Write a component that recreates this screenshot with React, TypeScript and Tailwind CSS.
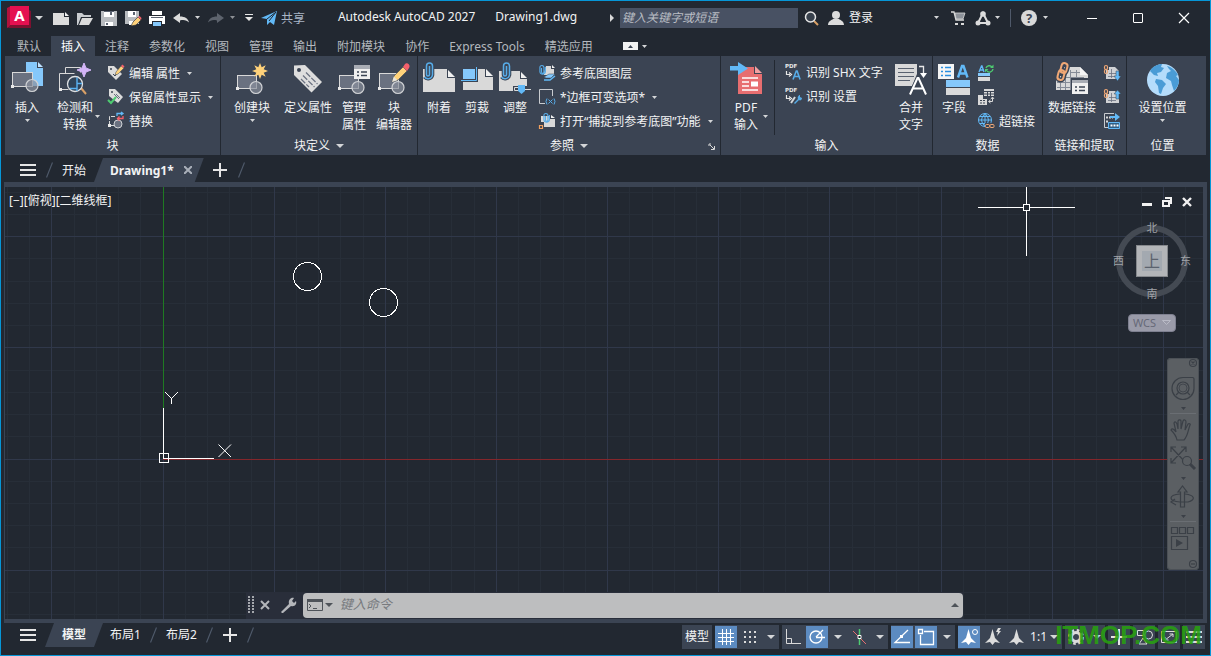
import type { ReactNode } from 'react'
import { useState } from 'react'
import clsx from 'clsx'

type IconProps = { children: ReactNode; size?: 16 | 32 }

function Icon({ children, size = 16 }: IconProps) {
  return (
    <svg
      viewBox={`0 0 ${size} ${size}`}
      className={clsx('shrink-0 overflow-visible', size === 32 ? 'size-8' : 'size-4')}
      fill="none"
      aria-hidden="true"
    >
      {children}
    </svg>
  )
}

function Caret({ wide = false, className }: { wide?: boolean; className?: string }) {
  return (
    <svg
      viewBox="0 0 8 4"
      className={clsx('shrink-0', wide ? 'h-1 w-2' : 'h-[3px] w-[5px]', className)}
      preserveAspectRatio="none"
      aria-hidden="true"
    >
      <path d="M0 0h8L4 4z" fill="#d4d6d8" />
    </svg>
  )
}

function Slash() {
  return (
    <svg viewBox="0 0 7 16" className="h-4 w-[7px] shrink-0" aria-hidden="true">
      <path d="M6.5 0.5L0.5 15.5" stroke="#4f596a" strokeWidth="1.2" />
    </svg>
  )
}

function Menu() {
  return (
    <Icon>
      <path d="M0 3h16M0 8h16M0 13h16" stroke="#e6e6e6" strokeWidth="2" />
    </Icon>
  )
}

function Plus() {
  return (
    <Icon>
      <path d="M1 8h14M8 1v14" stroke="#e6e6e6" strokeWidth="2" />
    </Icon>
  )
}

/* ---------- large ribbon icons ---------- */

function Block({ x = 1.5, y = 13.5, w = 19, h = 13 }) {
  return (
    <>
      <rect x={x} y={y} width={w} height={h} fill="#6a7180" stroke="#d9d9d9" />
      <rect x={x - 1.5} y={y + h - 1.5} width="3" height="3" fill="#e8e8e8" />
      <circle cx={x + w - 0.5} cy={y + h - 1} r="6" fill="#8a909c" fillOpacity="0.7" stroke="#d0d2d5" strokeWidth="1.2" />
    </>
  )
}

const InsertIcon = () => (
  <Icon size={32}>
    <path d="M15 0h11v6h6v18H15z" fill="#85c8fb" />
    <path d="M27 0l5 5h-5z" fill="#bfe2ff" />
    <Block x={1.5} y={10.5} w={20} h={14} />
  </Icon>
)

const DetectIcon = () => (
  <Icon size={32}>
    <path d="M6.500 11V5.500h15v5M0.500 27V11.500h15M0.500 27.500h9" stroke="#d9d9d9" />
    <rect x="0" y="26" width="3" height="3" fill="#e8e8e8" />
    <path d="M22 26l5 6" stroke="#d9a066" strokeWidth="2" />
    <circle cx="16" cy="22" r="7.500" fill="#2f4257" stroke="#dfe1e3" strokeWidth="1.300" />
    <path d="M18 15.500V29M18 21.500h5M11 26.500h7" stroke="#5ab2f2" strokeWidth="1.400" />
    <path d="M25 1l2 5 5 2-5 2-2 5-2-5-5-2 5-2z" fill="#d3b5f7" stroke="#d3b5f7" />
  </Icon>
)

const CreateIcon = () => (
  <Icon size={32}>
    <Block />
    <path d="M24 1l1.700 4.300 4-2-2 4 4.300 1.700-4.300 1.700 2 4-4-2L24 17l-1.700-4.300-4 2 2-4L16 9l4.300-1.700-2-4 4 2z" fill="#ffd27a" />
  </Icon>
)

const TagIcon = () => (
  <Icon size={32}>
    <path fillRule="evenodd" d="M2 3.500L13 3l17 17-10.500 10.500L2 13zM7 6a2 2 0 100 4.010A2 2 0 007 6z" fill="#dedede" />
    <path d="M11 13.500L22.500 25M14 10.500L25.500 22M9 17l8 8" stroke="#6a7180" strokeWidth="1.200" strokeDasharray="6 1.500" />
  </Icon>
)

const ManageIcon = () => (
  <Icon size={32}>
    <Block x={1.500} y={13.500} w={19} />
    <path d="M16 3h16v14H16z" fill="#f0f0f0" />
    <path d="M16 3h16v4H16z" fill="#a9adb5" />
    <path d="M19 10h2M23 10h6M19 13.500h2M23 13.500h6" stroke="#3b4453" strokeWidth="1.300" />
  </Icon>
)

const Pencil = () => (
  <>
    <path d="M14 20l2-6L25 5l4 4-9 9z" fill="#ffd27a" stroke="#3b4453" strokeWidth="0.600" />
    <path d="M14 20l1.800-5.500 3.700 3.700z" fill="#e8e4da" />
    <path d="M25 5l2-3c2-2 6 1 4 4l-2 3z" fill="#f4606b" />
  </>
)

const EditorIcon = () => (
  <Icon size={32}>
    <Block x={1.500} y={11.500} w={19} h={15} />
    <Pencil />
  </Icon>
)

function PaperClip({ x = 0 }: { x?: number }) {
  const d = 'M7.500 4v8.500a1.500 1.500 0 01-3 0V4a3 3 0 016 0v9a4.500 4.500 0 01-8 2'
  return (
    <g transform={`translate(${x} 0)`}>
      <path d={d} stroke="#3b4453" strokeWidth="3.600" />
      <path d={d} stroke="#57ace8" strokeWidth="1.500" />
    </g>
  )
}

const AttachIcon = () => (
  <Icon size={32}>
    <path d="M0 7h24v9h8v14H0z" fill="#d9d9d9" />
    <path d="M25 8l7 7h-7z" fill="#f1f1f1" />
    <PaperClip x={-1} />
  </Icon>
)

const ClipIcon = () => (
  <Icon size={32}>
    <path d="M2 7h22v8h8v13H2z" fill="#d9d9d9" />
    <path d="M25 7l7 7h-7z" fill="#f1f1f1" />
    <path d="M0 5h17v15H0z" fill="#3b4453" />
    <path d="M2 7h12v10H2z" fill="#85c8fb" />
    <path d="M0 18.500h15.500V5" stroke="#62b9f7" />
  </Icon>
)

const AdjustIcon = () => (
  <Icon size={32}>
    <path d="M0 9h21v8h7v12H0z" fill="#d9d9d9" />
    <path d="M22 10l6 6h-6z" fill="#f1f1f1" />
    <PaperClip />
    <path d="M14 24h18v6H14z" fill="#3b4453" />
    <path d="M15.500 25.500h4v3h-4zM25 27.500h7" stroke="#d9d9d9" />
    <path d="M19 23h7v6l-3.500 3L19 29z" fill="#62b9f7" />
  </Icon>
)

const PdfIcon = () => (
  <Icon size={32}>
    <path d="M8 5h16v7h8v20H8z" fill="#e76e70" />
    <path d="M25 4l7 7h-7z" fill="#f3a0a1" />
    <path d="M12 16h16M12 20h7M12 24h7M12 28h16" stroke="#fff" strokeWidth="1.300" />
    <path d="M21 19.500h7v5h-7z" fill="#fff" />
    <path d="M0 4h8V0l10 6.500L8 13V8.500H0z" fill="#62b9f7" />
  </Icon>
)

const MergeTextIcon = () => (
  <Icon size={32}>
    <path d="M0 2h22v10l-5 12H0z" fill="#d9d9d9" />
    <path d="M3 6.500h16M3 10.500h16M3 14.500h16M3 18.500h12" stroke="#59616f" />
    <path d="M24 4.500h4.500V13" stroke="#e8e8e8" strokeWidth="1.300" />
    <path d="M25 11h7l-3.500 5z" fill="#fff" />
    <path d="M15 33l8-17 9 17M18 27.500h11" stroke="#3b4453" strokeWidth="4" />
    <path d="M15 32.500L22.500 16h1L31 32.500M18 26.500h10.500" stroke="#fff" strokeWidth="2" />
  </Icon>
)

const FieldIcon = () => (
  <Icon size={32}>
    <path d="M0 2h16v15H0z" fill="#f5f5f5" />
    <path d="M3 5.500h2M7 5.500h6M3 9.500h2M7 9.500h6M3 13.500h2M7 13.500h6" stroke="#2a8fe0" strokeWidth="1.500" />
    <path d="M8 18h24v7H8z" fill="#85c8fb" />
    <path d="M8 26h24v7H8z" fill="#d9d9d9" />
    <path d="M20 15.500L24 4h1.500l4 11.500M21.500 11.500h6.500" stroke="#62b9f7" strokeWidth="2.400" />
  </Icon>
)

const DataLinkIcon = () => (
  <Icon size={32}>
    <path d="M0 14h8V5h16l8 8v8H16v7H0z" fill="#d9d9d9" />
    <path d="M24 5v8h8z" fill="#f5f5f5" />
    <path d="M1 20.500h15M1 25.500h14M4.500 20v8M9.500 14v14M14.500 8v20M20.500 8v10M15 10.500h9M10 15.500h18" stroke="#858b96" />
    <path d="M15 16h17v17H15z" fill="#3b4453" />
    <path d="M16 18h16v14H16z" fill="#f0f0f0" />
    <path d="M16 18h16v3H16z" fill="#a9adb5" />
    <path d="M19 25h2M23 25h6M19 28.500h2M23 28.500h6" stroke="#3b4453" strokeWidth="1.300" />
    <g stroke="#3b4453" strokeWidth="5">
      <rect x="5" y="1" width="6" height="10" rx="3" transform="rotate(15 8 6)" />
      <rect x="2" y="8" width="6" height="10" rx="3" transform="rotate(15 5 13)" />
    </g>
    <g stroke="#f0a876" strokeWidth="2">
      <rect x="5" y="1" width="6" height="10" rx="3" transform="rotate(15 8 6)" />
      <rect x="2" y="8" width="6" height="10" rx="3" transform="rotate(15 5 13)" />
    </g>
  </Icon>
)

const GlobeIcon = () => (
  <Icon size={32}>
    <circle cx="16" cy="18" r="16" fill="#b4dcfb" />
    <path
      d="M3 9c3-5 8-7 12-7l-1 3 3 1-3 4-4 1 1 3-4-1-3-3zM9 17l6 1 4 4-3 4-2 6-2-1-1-7-3-4zM20 4c5 1 9 5 11 9l-2 1 3 4c0 4-2 8-5 11l-2-6-1-4-5-3 1-5 4-2-2-2z"
      fill="#4a9cd6"
    />
  </Icon>
)

/* ---------- small ribbon icons ---------- */

const EditAttrIcon = () => (
  <Icon>
    <path d="M0 1l6 0 8 8-6 6-8-8z" fill="#dcdcdc" />
    <circle cx="3" cy="4" r="1" fill="#3b4453" />
    <path d="M5 9l2 2 2-3" stroke="#3b4453" />
    <path d="M8 7l5-6 3 2-6 6-3 1z" fill="#ffd27a" stroke="#3b4453" strokeWidth="0.500" />
    <path d="M13 1l1.500-1.500 2 2L15 3z" fill="#f4606b" />
  </Icon>
)

const KeepAttrIcon = () => (
  <Icon>
    <path d="M1 0l6 0 8 8-5 6-4-3-5-4z" fill="#dcdcdc" />
    <circle cx="4" cy="3" r="1" fill="#3b4453" />
    <path d="M6 5l5 5M8 5l4 4" stroke="#6a7180" />
    <path d="M0 11l3 3 5-6" stroke="#4ecb71" strokeWidth="2" />
  </Icon>
)

const ReplaceIcon = () => (
  <Icon>
    <path d="M7 3.500H1.500v9H6" stroke="#d9d9d9" strokeDasharray="4 1" />
    <path d="M0 11h3v3H0z" fill="#e8e8e8" />
    <circle cx="10" cy="11" r="4" fill="#6a7180" stroke="#d0d2d5" />
    <path d="M10 5.500h5V3M11.500 3.500l-2 2 2 2" stroke="#f4606b" strokeWidth="1.300" />
    <path d="M9 3V.500h5M13-1l2 1.500L13 2" stroke="#62b9f7" strokeWidth="1.300" />
  </Icon>
)

const SmallClip = () => (
  <path d="M2.500 3v4a1.200 1.200 0 002.400 0V2.500a2 2 0 00-4 0V7a2.800 2.800 0 005.500 0V2" stroke="#57ace8" strokeWidth="1.100" />
)

const LayerIcon = () => (
  <Icon>
    <path d="M7 1h5v3h3v6H5V8z" fill="#d9d9d9" />
    <path d="M13 0l3 3h-3z" fill="#f1f1f1" />
    <SmallClip />
    <path d="M5 12l5-3h6l-4 4H7z" fill="#85c8fb" stroke="#3b4453" strokeWidth="0.500" />
    <path d="M5 15h6l5-4" stroke="#62b9f7" strokeWidth="1.500" />
  </Icon>
)

const FrameIcon = () => (
  <Icon>
    <path d="M6 14.500H.5V.500h13V7" stroke="#c9ccd0" />
    <path d="M8 9.500q-2 3 0 6M15 9.500q2 3 0 6M9.500 10.500l4 4M13.500 10.500l-4 4" stroke="#57ace8" />
  </Icon>
)

const SnapIcon = () => (
  <Icon>
    <path d="M2 3h9v3h5v8H5V9H2z" fill="#d9d9d9" />
    <path d="M12 2l4 3h-4z" fill="#f1f1f1" />
    <g transform="translate(4 0)">
      <SmallClip />
    </g>
    <path d="M.5 12.500h3v3h-3z" stroke="#f0a060" strokeWidth="1.200" />
  </Icon>
)

function PdfText({ children }: { children: ReactNode }) {
  return (
    <Icon>
      <text x="0" y="4" fontSize="5.500" fontWeight="700" fill="#e8e8e8" fontFamily="DejaVu Sans, sans-serif">PDF</text>
      <path d="M1.500 7v3.500H5M4 8.500l2.500 2L4 12.500" stroke="#e8e8e8" strokeWidth="1.200" />
      {children}
    </Icon>
  )
}

const RefreshFieldIcon = () => (
  <Icon>
    <path d="M0 8h12v3H0z" fill="#85c8fb" />
    <path d="M0 12h12v4H0z" fill="#d9d9d9" />
    <path d="M1 7l2.500-6h.5L6 7M2 5h4" stroke="#62b9f7" strokeWidth="1.300" />
    <path d="M8 3a3.500 3.500 0 016-1M15 4a3.500 3.500 0 01-6 2" stroke="#4ecb71" strokeWidth="1.400" />
    <path d="M15.500-.5V3H12zM7 7.500V4h3.500z" fill="#4ecb71" />
  </Icon>
)

const TableIcon = () => (
  <Icon>
    <path d="M6 0h10v7H6zM0 6h5v4h4v6H0z" fill="#d9d9d9" />
    <path d="M6 2.500h10M6 5h10M9.500 2.500V7M12.500 2.500V7M2 11.500h2M5 11.500h2M2 14h2M5 14h2" stroke="#3b4453" />
    <path d="M11 12.500h3.500V8.500M13 10l1.500-2 1.500 2M12.500 11l-2 1.500 2 1.500" stroke="#d9d9d9" />
  </Icon>
)

const WebIcon = () => (
  <Icon>
    <circle cx="7" cy="7" r="6.500" stroke="#62b9f7" />
    <path d="M7 .5v13M.5 7h13M2 3.500h10M2 10.500h6M7 .5q-7 6.500 0 13M7 .5q7 6.500 0 13" stroke="#62b9f7" />
    <path d="M7 10h9v5H7z" fill="#3b4453" />
    <rect x="7.500" y="11.500" width="4" height="3" rx="1" stroke="#f0a876" />
    <rect x="12" y="11.500" width="4" height="3" rx="1" stroke="#f0a876" />
  </Icon>
)

function LinkArrowIcon({ up = false }: { up?: boolean }) {
  return (
    <Icon>
      <path d="M2 5h3V2h6l4 4v8H2z" fill="#d0d2d5" />
      <path d="M5 8.500h7M4 11.500h8M7.500 4v9" stroke="#6a7180" strokeWidth=".800" />
      <rect x=".500" y="0.500" width="3" height="4" rx="1.500" stroke="#f0a876" strokeWidth="1.200" />
      <rect x=".500" y="4.500" width="3" height="4" rx="1.500" stroke="#f0a876" strokeWidth="1.200" />
      <path
        d={up ? 'M12 10V5h-2l3.500-4L17 5h-2v5z' : 'M12 6v5h-2l3.500 5 3.500-5h-2V6z'}
        fill="#62b9f7"
        stroke="#3b4453"
        strokeWidth=".500"
      />
    </Icon>
  )
}

const ExtractIcon = () => (
  <Icon>
    <path d="M4 14.500H.500v-14H10" stroke="#c9ccd0" />
    <path d="M2 4.500h7M2 8.500h2" stroke="#d9d9d9" strokeDasharray="2 1" strokeWidth="2" />
    <path d="M6 3h5V0l5 4-5 4V5H6z" fill="#62b9f7" />
    <path d="M4.500 9.500h11v6h-11z" fill="#2f5f86" stroke="#62b9f7" />
    <path d="M6.500 12.500h8" stroke="#fff" strokeDasharray="2 1" strokeWidth="2" />
  </Icon>
)

/* ---------- ribbon building blocks ---------- */

type BigButtonProps = { icon: ReactNode; lines: string[]; width?: string; caret?: 'below' | 'side' }

function BigButton({ icon, lines, width = 'w-8', caret }: BigButtonProps) {
  return (
    <button type="button" className="flex shrink-0 items-end gap-px self-start pt-1.5">
      <span className={clsx('flex flex-col items-center', width)}>
        {icon}
        <span className="mt-[5px] text-center leading-[17px] whitespace-nowrap">
          {lines.map(line => <span key={line} className="block">{line}</span>)}
        </span>
        {caret === 'below' && <Caret className="mt-[3px]" />}
      </span>
      {caret === 'side' && <Caret className="mb-[15px]" />}
    </button>
  )
}

function SmallButton({ icon, label, name, caret = false }: { icon: ReactNode; label?: string; name?: string; caret?: boolean }) {
  return (
    <button type="button" aria-label={name} className="flex h-6 items-center gap-[5px] whitespace-nowrap">
      {icon}
      {label && <span className="pt-0.5">{label}</span>}
      {caret && <Caret className="ml-0.5" />}
    </button>
  )
}

function Panel({ title, grow, more, launcher, className, children }: {
  title: string
  grow: string
  more?: boolean
  launcher?: boolean
  className?: string
  children: ReactNode
}) {
  return (
    <section aria-label={title} className={clsx('relative flex flex-col border-r border-[#222831] last:border-0', grow)}>
      <div className={clsx('flex h-[79px]', className)}>{children}</div>
      <div className="flex h-5 items-center justify-center gap-1.5 pt-0.5">
        {title}
        {more && <Caret wide />}
      </div>
      {launcher && (
        <button type="button" aria-label="参照设置" className="absolute right-1 bottom-1">
          <svg viewBox="0 0 8 8" className="size-2" fill="none" aria-hidden="true">
            <path d="M1 3V1h2M2 2l4 4M6.500 3v3.500H3" stroke="#d9d9d9" />
          </svg>
        </button>
      )}
    </section>
  )
}

function Ribbon() {
  return (
    <div className="mx-1 mb-[3px] flex bg-[#3b4453] text-[#f2f3f4]">
      <Panel title="块" grow="flex-[215]">
        <BigButton icon={<InsertIcon />} lines={['插入']} width="w-11" caret="below" />
        <div className="ml-[7px] flex gap-2">
          <BigButton icon={<DetectIcon />} lines={['检测和', '转换']} width="w-[38px]" caret="side" />
          <div className="pt-[5px]">
            <SmallButton icon={<EditAttrIcon />} label="编辑 属性" caret />
            <SmallButton icon={<KeepAttrIcon />} label="保留属性显示" caret />
            <SmallButton icon={<ReplaceIcon />} label="替换" />
          </div>
        </div>
      </Panel>
      <Panel title="块定义" grow="flex-[196]" more className="gap-1.5 pl-[5px]">
        <BigButton icon={<CreateIcon />} lines={['创建块']} width="w-[52px]" caret="below" />
        <BigButton icon={<TagIcon />} lines={['定义属性']} width="w-12" />
        <BigButton icon={<ManageIcon />} lines={['管理', '属性']} />
        <BigButton icon={<EditorIcon />} lines={['块', '编辑器']} width="w-9" />
      </Panel>
      <Panel title="参照" grow="flex-[302]" more launcher className="gap-1.5 pl-[5px]">
        <BigButton icon={<AttachIcon />} lines={['附着']} />
        <BigButton icon={<ClipIcon />} lines={['剪裁']} />
        <BigButton icon={<AdjustIcon />} lines={['调整']} />
        <div className="pt-[5px] pl-0.5">
          <SmallButton icon={<LayerIcon />} label="参考底图图层" />
          <SmallButton icon={<FrameIcon />} label="*边框可变选项*" caret />
          <SmallButton icon={<SnapIcon />} label="打开“捕捉到参考底图”功能" caret />
        </div>
      </Panel>
      <Panel title="输入" grow="flex-[211]" className="pr-[5px] pl-[9px]">
        <BigButton icon={<PdfIcon />} lines={['PDF', '输入']} caret="side" />
        <div className="mt-1 ml-1.5 w-px bg-[#222831]" />
        <div className="ml-2.5 pt-1">
          <SmallButton
            icon={<PdfText><path d="M8 15.500L11.300 7h.8l3 8.500M9.500 12.500h4.500" stroke="#57ace8" strokeWidth="1.600" /></PdfText>}
            label="识别 SHX 文字"
          />
          <SmallButton
            icon={<PdfText><path d="M6 15l4-6" stroke="#d9d9d9" strokeWidth="2" /><path d="M9 15l4-4c-1-2 1-4 2-4v2l2 1c0 2-2 3-3 2l-4 4z" fill="#57ace8" /></PdfText>}
            label="识别 设置"
          />
        </div>
        <div className="ml-auto flex">
          <BigButton icon={<MergeTextIcon />} lines={['合并', '文字']} />
        </div>
      </Panel>
      <Panel title="数据" grow="flex-[109]" className="gap-2 pl-[5px]">
        <BigButton icon={<FieldIcon />} lines={['字段']} />
        <div className="pt-[5px]">
          <SmallButton icon={<RefreshFieldIcon />} name="更新字段" />
          <SmallButton icon={<TableIcon />} name="OLE 对象" />
          <SmallButton icon={<WebIcon />} label="超链接" />
        </div>
      </Panel>
      <Panel title="链接和提取" grow="flex-[83]" className="gap-2 pl-[5px]">
        <BigButton icon={<DataLinkIcon />} lines={['数据链接']} width="w-12" />
        <div className="pt-[5px]">
          <SmallButton icon={<LinkArrowIcon />} name="从源下载" />
          <SmallButton icon={<LinkArrowIcon up />} name="上载到源" />
          <SmallButton icon={<ExtractIcon />} name="提取数据" />
        </div>
      </Panel>
      <Panel title="位置" grow="flex-[71] pr-2" className="justify-center">
        <BigButton icon={<GlobeIcon />} lines={['设置位置']} width="w-12" caret="below" />
      </Panel>
    </div>
  )
}

/* ---------- title bar ---------- */

function ToolButton({ name, children }: { name: string; children: ReactNode }) {
  return <button type="button" aria-label={name} className="flex shrink-0 items-center">{children}</button>
}

function TitleBar() {
  return (
    <header className="flex h-[35px] items-center pb-0.5 pl-1.5 text-[#f2f3f4]">
      <ToolButton name="应用程序菜单">
        <svg viewBox="0 0 24 23" className="h-[23px] w-6" aria-hidden="true">
          <path d="M0 2l4-2v20l-4 2z" fill="#b0123c" />
          <path d="M1 22h23V5l-2-1-1 14H4z" fill="#7d1130" />
          <rect x="3" y="0" width="19" height="19" fill="#e51050" />
          <text x="12.500" y="15" fontSize="15" fontWeight="700" textAnchor="middle" fill="#fff" fontFamily="Noto Sans, sans-serif">A</text>
        </svg>
        <Caret wide className="ml-1" />
      </ToolButton>
      <div className="ml-2.5 flex items-center gap-2">
        <ToolButton name="新建">
          <Icon><path d="M0 3h11v4h5v8H0z" fill="#dcdcdc" /><path d="M12 2l4 4h-4z" fill="#f1f1f1" /></Icon>
        </ToolButton>
        <ToolButton name="打开">
          <Icon><path d="M0 3h5l2 2h7v2H4L1 15H0z" fill="#c9ccd0" /><path d="M5 8h11l-4 7H2z" fill="#dcdcdc" /></Icon>
        </ToolButton>
        <ToolButton name="保存">
          <Icon>
            <path d="M0 1h16v15H0z" fill="#b9bcc0" />
            <path d="M3 1h10v6H3zM4 12h8v4H4z" fill="#fff" />
            <path d="M3 1h10v1H3zM9 2h2v3H9zM5 13h2v2H5z" fill="#59616f" />
          </Icon>
        </ToolButton>
        <ToolButton name="另存为">
          <Icon>
            <path d="M0 1h14v13H0z" fill="#b9bcc0" />
            <path d="M3 1h8v6H3zM4 11h4v4H4z" fill="#fff" />
            <path d="M8 2h2v3H8z" fill="#59616f" />
            <path d="M6 16l2-4 5-5 3 3-5 5z" fill="#ffd27a" stroke="#222831" strokeWidth=".6" />
            <path d="M13 7l1.500-1 2 2L16 10z" fill="#f4606b" />
          </Icon>
        </ToolButton>
        <ToolButton name="打印">
          <Icon>
            <path d="M3 1h10v4H3zM0 6h16v8h-3v-3H3v3H0z" fill="#fff" />
            <path d="M2 7.500h12" stroke="#59616f" />
            <path d="M4 12h8v4H4z" fill="#85c8fb" />
          </Icon>
        </ToolButton>
        <ToolButton name="放弃">
          <Icon><path d="M0 8l7-5v3.500c5 0 8 2 9 6-2-2-5-3-9-2V13z" fill="#dcdcdc" /></Icon>
          <Caret className="ml-1.5" />
        </ToolButton>
        <ToolButton name="重做">
          <Icon><path d="M16 8L9 3v3.500c-5 0-8 2-9 6 2-2 5-3 9-2V13z" fill="#5d636d" /></Icon>
          <Caret className="ml-1.5 opacity-60" />
        </ToolButton>
        <ToolButton name="自定义快速访问工具栏">
          <svg viewBox="0 0 8 8" className="ml-0.5 size-2" aria-hidden="true">
            <path d="M0 .5h8" stroke="#e6e6e6" /><path d="M0 3h8L4 7z" fill="#e6e6e6" />
          </svg>
        </ToolButton>
      </div>
      <button type="button" className="ml-2 flex shrink-0 items-center gap-1 text-[#aab6c6]">
        <Icon><path d="M0 8L16 1l-3 14-4-3-3 3V9z" fill="#62b9f7" /><path d="M6 9l9-7-7 9" stroke="#222831" /></Icon>
        <span className="pt-0.5">共享</span>
      </button>
      <h1 className="flex flex-1 justify-center gap-5 pb-0.5 whitespace-nowrap">
        <span>Autodesk AutoCAD 2027</span>
        <span>Drawing1.dwg</span>
      </h1>
      <div className="flex items-center">
        <svg viewBox="0 0 4 8" className="h-2 w-1" aria-hidden="true"><path d="M0 0l4 4-4 4z" fill="#d9d9d9" /></svg>
        <input
          aria-label="搜索"
          placeholder="键入关键字或短语"
          className="ml-1.5 h-5 w-[178px] bg-[#485163] px-0.5 italic outline-none placeholder:text-[#b9bdc4]"
        />
        <div className="ml-1.5 flex items-center gap-2">
          <ToolButton name="查找">
            <Icon>
              <path d="M10 11l4 4" stroke="#d9a066" strokeWidth="2" />
              <circle cx="6.500" cy="7" r="5" fill="#38414d" stroke="#e6e6e6" strokeWidth="1.500" />
            </Icon>
          </ToolButton>
          <button type="button" className="flex items-center gap-[5px]">
            <Icon><circle cx="8" cy="5" r="4" fill="#dcdcdc" /><path d="M0 15c0-4 4-5 5-6h6c1 1 5 2 5 6z" fill="#dcdcdc" /></Icon>
            登录
            <Caret className="ml-14" />
          </button>
        </div>
        <div className="ml-3 flex items-center gap-2">
          <ToolButton name="应用商店">
            <Icon>
              <path d="M0 2h3l2 8h8" stroke="#d9d9d9" strokeWidth="1.300" />
              <path d="M4 3h10l-2 6H5z" fill="#8d929a" stroke="#d9d9d9" strokeWidth=".8" />
              <path d="M4 13h3v2H4zM10 13h3v2h-3z" fill="#d9d9d9" />
            </Icon>
          </ToolButton>
          <ToolButton name="Autodesk 应用">
            <Icon>
              <path d="M8 3L3 13h10z" stroke="#dcdcdc" strokeWidth="2" />
              <circle cx="8" cy="4" r="2.800" fill="#dcdcdc" /><circle cx="3" cy="13" r="2.500" fill="#dcdcdc" /><circle cx="13" cy="13" r="2.500" fill="#dcdcdc" />
            </Icon>
            <Caret className="ml-1" />
          </ToolButton>
        </div>
        <div className="mx-2.5 h-[18px] w-px bg-[#4f596a]" />
        <ToolButton name="帮助">
          <Icon>
            <circle cx="8" cy="8" r="8" fill="#d9d9d9" />
            <text x="8" y="12.500" fontSize="13" fontWeight="700" textAnchor="middle" fill="#3b4453" fontFamily="Noto Sans, sans-serif">?</text>
          </Icon>
          <Caret className="ml-1.5" />
        </ToolButton>
        <div className="flex gap-[30px] pr-[18px] pl-9">
          <ToolButton name="最小化"><Icon><path d="M3 8.500h10" stroke="#fff" /></Icon></ToolButton>
          <ToolButton name="最大化"><Icon><rect x="3.500" y="3.500" width="9" height="9" rx=".5" stroke="#fff" /></Icon></ToolButton>
          <ToolButton name="关闭"><Icon><path d="M3 3l10 10M13 3L3 13" stroke="#fff" strokeWidth="1.200" /></Icon></ToolButton>
        </div>
      </div>
    </header>
  )
}

const tabs = ['默认', '插入', '注释', '参数化', '视图', '管理', '输出', '附加模块', '协作', 'Express Tools', '精选应用']

function RibbonTabs() {
  const [active, setActive] = useState('插入')
  return (
    <nav className="flex h-5 items-center pl-1.5 text-[#b4b8be]">
      {tabs.map(tab => (
        <button
          key={tab}
          type="button"
          onClick={() => setActive(tab)}
          className={clsx('h-5 px-2.5 pt-0.5 whitespace-nowrap', tab === active && 'bg-[#3b4453] text-white')}
        >
          {tab}
        </button>
      ))}
      <button type="button" aria-label="最小化功能区" className="ml-5 flex items-center gap-1">
        <svg viewBox="0 0 15 8" className="h-2 w-[15px]" aria-hidden="true">
          <path d="M0 0h15v8H0z" fill="#f2f2f2" /><path d="M5 6l2.500-3L10 6z" fill="#3b4453" />
        </svg>
        <Caret />
      </button>
    </nav>
  )
}

/* ---------- drawing area ---------- */

const ORIGIN = { x: 158, y: 272 }
const STEP = 111.15

function gridLines(origin: number, count: number) {
  return Array.from({ length: count }, (_, i) => i - 15).map(n => ({
    n,
    at: Math.floor(origin + (n * STEP) / 5),
    major: n % 5 === 0,
  }))
}

function Drawing() {
  const columns = gridLines(ORIGIN.x, 120)
  const rows = gridLines(ORIGIN.y, 80)
  return (
    <svg className="absolute inset-0 h-full w-full" fill="none" aria-hidden="true">
      {[false, true].map(major => (
        <g key={String(major)} fill={major ? '#30384a' : '#272e38'}>
          {columns.filter(c => c.major === major).map(c => <rect key={c.n} x={c.at} y="0" width="1" height="100%" />)}
          {rows.filter(r => r.major === major).map(r => <rect key={r.n} x="0" y={r.at} width="100%" height="1" />)}
        </g>
      ))}
      <rect x={ORIGIN.x} y="0" width="1" height="222" fill="#1f7a22" />
      <rect x={ORIGIN.x} y={ORIGIN.y} width="100%" height="1" fill="#84262b" />
      <g stroke="#fff" shapeRendering="crispEdges">
        <path d="M158.500 221v50.500H209M154.500 266.500h9v9h-9z" />
        <circle cx="302.500" cy="89.500" r="14" />
        <circle cx="378.500" cy="115.500" r="14" />
        <path d="M973 20.500h45M1025 20.500h45M1021.500 0v17M1021.500 24v45M1018.500 17.500h6v6h-6z" />
      </g>
      <path d="M160 205l6.500 6.500L173 205M166.500 211v6M213.500 257.500l12.500 12.500M226 257.500L213.500 270" stroke="#fff" />
    </svg>
  )
}

function ViewCube() {
  return (
    <div className="absolute top-[33px] right-3 flex w-[78px] flex-col items-center text-[#a0a3a8]">
      <div className="relative flex h-[82px] w-[78px] items-center justify-between">
        <div className="absolute inset-x-[3px] inset-y-[5px] rounded-full border-[6px] border-[#444a53]" />
        <span className="relative text-[11px]">西</span>
        <div className="relative flex h-[82px] flex-col items-center justify-between text-[11px]">
          <span className="leading-4">北</span>
          <button type="button" className="grid size-8 place-items-center border border-[#85888c] bg-[#b3b5b8]">
            <span className="grid size-5 place-items-center bg-[#a3a9b0] text-base leading-5 text-[#5b636e]">上</span>
          </button>
          <span className="leading-4">南</span>
        </div>
        <span className="relative text-[11px]">东</span>
      </div>
      <button type="button" className="mt-3 flex h-[18px] w-12 items-center justify-between rounded-sm border border-[#7e8090] bg-[#9a9ba9] px-1 text-[11px] text-[#666978]">
        WCS
        <svg viewBox="0 0 9 6" className="h-1.5 w-[9px]" fill="none" aria-hidden="true"><path d="M.5.500h8l-4 4z" stroke="#b9bac6" /></svg>
      </button>
    </div>
  )
}

function NavBar() {
  return (
    <div className="absolute top-[171px] right-1 h-[212px] w-8 rounded bg-[#5b5f63] ring-1 ring-[#4b5056] ring-inset">
      <svg viewBox="0 0 32 212" className="h-full w-full" fill="none" stroke="#3b4047" aria-label="导航栏" role="img">
        <g strokeWidth="1.200">
          <circle cx="26" cy="5" r="3.500" /><path d="M24.500 3.500l3 3M27.500 3.500l-3 3" />
          <path d="M16 19.500h9.500a1.500 1.500 0 011.500 1.500v9.500a11 11 0 11-11-11z" />
          <circle cx="16" cy="30" r="6" /><circle cx="16" cy="30" r="4" strokeWidth=".8" />
          <path d="M9 37l3-3M23 37l-3-3" />
          <path d="M10 82c-1-5-3-7-6-10 1-2 3-1 5 2l-2-9c1-2 2-1 3 1l1 5 0-8c1-2 3-1 3 0v8l2-8c1-2 3-1 3 1l-1 8 3-6c1-1 3 0 2 1-2 5-2 11-6 15z" />
          <path d="M4 89l15 16M19 89L4 105M4 94v-5h5M14 89h5v5M4 100v5h5" />
          <circle cx="20" cy="103" r="4.500" fill="#5b5f63" /><path d="M23 106l5 5" strokeWidth="3" />
          <path d="M13.500 149v-15H11l4.500-6 4.500 6h-2.500v15z" />
          <path d="M13 136c-12 1-12 7 0 8h8c8-2 7-7-3-8M8 141l-4 3 5 3" />
          <path d="M4.500 169.500h6v6h-6zM12.500 169.500h6v6h-6zM20.500 169.500h6v6h-6zM4.500 178.500h16v13h-16z" />
          <circle cx="26" cy="206" r="3.500" /><path d="M24 206h4" />
        </g>
        <path d="M9 181v8l7-4zM14 49h5l-2.500 3zM14 119h5l-2.500 3zM14 157h5l-2.500 3z" fill="#3b4047" stroke="none" />
        <path d="M3 55.500h26M3 163.500h26" stroke="#6a6e73" />
      </svg>
    </div>
  )
}

function CommandLine() {
  return (
    <div className="absolute bottom-0 left-[20.1%] flex h-[27px] w-[59.9%] items-center bg-[#292e3a] pb-px">
      <svg viewBox="0 0 6 18" className="ml-0.5 h-[18px] w-1.5" aria-hidden="true">
        {[0, 3, 6, 9, 12, 15].map(y => <path key={y} d={`M0 ${y}h2v2H0zM4 ${y}h2v2H4z`} fill="#a5a8ad" />)}
      </svg>
      <button type="button" aria-label="关闭命令行" className="ml-[7px]">
        <Icon><path d="M0 4l8 8M8 4l-8 8" stroke="#b4b6ba" strokeWidth="2" /></Icon>
      </button>
      <button type="button" aria-label="自定义" className="ml-1">
        <Icon><path d="M1 16l-1-1L8 7C7 3 10 0 13 1l-2 3 2 2 2-2c1 3-1 6-5 5l-8 7z" fill="#b4b6ba" /></Icon>
      </button>
      <div className="ml-1.5 flex h-[25px] flex-1 items-center rounded-sm bg-[#bdbebf]">
        <button type="button" aria-label="最近使用的命令" className="ml-1 flex items-center gap-0.5">
          <Icon>
            <path d="M.5 3.500h15v10H.5z" stroke="#4e5359" /><path d="M0 2h16v3H0z" fill="#4e5359" />
            <path d="M2 7l2 2-2 2M6 11.500h4" stroke="#4e5359" />
          </Icon>
          <svg viewBox="0 0 8 4" className="h-1 w-2" aria-hidden="true"><path d="M0 0h8L4 4z" fill="#4e5359" /></svg>
        </button>
        <input
          aria-label="命令"
          placeholder="键入命令"
          className="ml-[7px] min-w-0 flex-1 bg-transparent text-[13px] italic outline-none placeholder:text-[#777a7e]"
        />
        <button type="button" aria-label="命令历史" className="mr-1">
          <svg viewBox="0 0 8 4" className="h-1 w-2" aria-hidden="true"><path d="M0 4h8L4 0z" fill="#4e5359" /></svg>
        </button>
      </div>
    </div>
  )
}

function Canvas() {
  return (
    <main className="relative mx-[3px] min-h-0 flex-1 overflow-hidden border-t-[5px] border-r-4 border-b-4 border-l border-[#3b4453]">
      <Drawing />
      <div className="absolute top-[5px] left-1 leading-[18px] whitespace-nowrap text-[#f2f3f4]">[−][俯视][二维线框]</div>
      <div className="absolute top-[7px] right-2 flex gap-1">
        <ToolButton name="最小化视口"><Icon><path d="M3 9h10v3H3z" fill="#f2f2f2" /></Icon></ToolButton>
        <ToolButton name="还原视口"><Icon><path d="M6 3h7v7h-2V5H6z" fill="#f2f2f2" /><path d="M4 7h6v5H4z" stroke="#f2f2f2" strokeWidth="2" /></Icon></ToolButton>
        <ToolButton name="关闭视口"><Icon><path d="M4 4l8 8M12 4l-8 8" stroke="#f2f2f2" strokeWidth="2.400" /></Icon></ToolButton>
      </div>
      <ViewCube />
      <NavBar />
      <CommandLine />
    </main>
  )
}

/* ---------- file and layout tabs ---------- */

function FileTabs() {
  return (
    <div className="flex h-6 items-center pl-[19px] text-[#f2f3f4]">
      <ToolButton name="文件菜单"><Menu /></ToolButton>
      <span className="ml-2.5"><Slash /></span>
      <button type="button" className="ml-[9px] pt-0.5">开始</button>
      <div className="ml-2 flex h-6 items-center gap-2.5 bg-[#3b4453] pr-3 pl-4 font-bold [clip-path:polygon(9px_0,100%_0,calc(100%-9px)_100%,0_100%)]">
        <button type="button" className="pt-0.5">Drawing1*</button>
        <button type="button" aria-label="关闭 Drawing1">
          <svg viewBox="0 0 8 8" className="size-2" aria-hidden="true"><path d="M0 0l8 8M8 0L0 8" stroke="#a9afb9" strokeWidth="2" /></svg>
        </button>
      </div>
      <div className="ml-2 flex items-center gap-2.5">
        <ToolButton name="新图形"><Plus /></ToolButton>
        <Slash />
      </div>
    </div>
  )
}

function Toggle({ name, on = false, children }: { name: string; on?: boolean; children: ReactNode }) {
  return (
    <button type="button" aria-label={name} aria-pressed={on} className={clsx('grid h-[22px] w-[22px] place-items-center', on && 'bg-[#5c8bc1]')}>
      <Icon>{children}</Icon>
    </button>
  )
}

function Group({ children }: { children: ReactNode }) {
  return <div className="flex h-6 shrink-0 items-center gap-0.5 bg-[#3b4453]">{children}</div>
}

function More({ name }: { name: string }) {
  return <button type="button" aria-label={name} className="flex h-6 w-4 items-center justify-center"><Caret wide /></button>
}

const scaleArrow = 'M7.500 0l2.500 9 5 5-5-1-2.500 3L5 13l-5 1 5-5z'

function StatusBar() {
  return (
    <footer className="relative flex h-8 items-start justify-between pl-[19px] text-[#f2f3f4]">
      <div className="flex h-6 items-center">
        <ToolButton name="布局菜单"><Menu /></ToolButton>
        <button type="button" className="ml-[9px] h-6 bg-[#3b4453] px-[17px] font-bold [clip-path:polygon(9px_0,100%_0,calc(100%-9px)_100%,0_100%)]">模型</button>
        <button type="button" className="ml-[7px]">布局1</button>
        <span className="mx-[9px]"><Slash /></span>
        <button type="button">布局2</button>
        <span className="mx-[9px]"><Slash /></span>
        <ToolButton name="新建布局"><Plus /></ToolButton>
        <span className="ml-[9px]"><Slash /></span>
      </div>
      <div className="mt-0.5 mr-[5px] flex gap-[3px]">
        <Group><button type="button" className="px-[3px]">模型</button></Group>
        <Group>
          <Toggle name="栅格" on><path d="M0 4.500h16M0 8.500h16M0 12.500h16M4.500 0v16M8.500 0v16M12.500 0v16" stroke="#fff" /></Toggle>
          <Toggle name="捕捉">
            {[3, 8, 13].map(y => <path key={y} d={`M2 ${y}h12`} stroke="#d9d9d9" strokeWidth="2" strokeDasharray="2 3" />)}
          </Toggle>
          <More name="捕捉设置" />
        </Group>
        <Group>
          <Toggle name="正交"><path d="M1.500 0v14.500H16M1.500 9.500h5v5" stroke="#d9d9d9" /></Toggle>
          <Toggle name="极轴" on><circle cx="7" cy="8" r="6" stroke="#fff" strokeWidth="1.300" /><path d="M7 8.500h9M7 8l7-7" stroke="#fff" strokeWidth="1.300" /></Toggle>
          <More name="极轴设置" />
          <Toggle name="等轴测"><path d="M2 2l13 13" stroke="#e76e70" /><path d="M8.500 0v16" stroke="#4ecb71" strokeWidth="1.500" /><path d="M7 6.500h3v3H7z" fill="#222831" stroke="#fff" /></Toggle>
          <More name="等轴测设置" />
        </Group>
        <Group>
          <Toggle name="对象捕捉追踪" on><path d="M14 1L1 13.500h15" stroke="#fff" strokeWidth="1.300" /><path d="M6 6h3v3H6z" fill="#fff" /></Toggle>
          <Toggle name="对象捕捉" on><path d="M6 2.500h9.500v13h-13V6M.5.500h4v4h-4z" stroke="#fff" strokeWidth="1.300" /></Toggle>
          <More name="对象捕捉设置" />
        </Group>
        <Group>
          <Toggle name="注释可见性" on><path d={scaleArrow} fill="#fff" /><circle cx="14" cy="3" r="2.500" stroke="#fff" /></Toggle>
          <Toggle name="自动缩放"><path d={scaleArrow} fill="#dcdcdc" /><path d="M13-1l-2 4h2l-1 4 4-5h-2l2-3z" fill="#dcdcdc" /></Toggle>
          <Toggle name="注释比例"><path d={scaleArrow} fill="#dcdcdc" /></Toggle>
          <button type="button" className="flex items-center gap-[3px] pr-1">1:1<Caret wide /></button>
        </Group>
        <Group>
          <Toggle name="切换工作空间"><circle cx="8" cy="8" r="4.500" stroke="#dcdcdc" strokeWidth="3" /><circle cx="8" cy="8" r="6.500" stroke="#dcdcdc" strokeWidth="3" strokeDasharray="2.500 2.600" /></Toggle>
          <More name="工作空间列表" />
        </Group>
        <Group><Toggle name="注释监视器"><path d="M0 8h16M8 0v16" stroke="#e6e6e6" strokeWidth="2" /></Toggle></Group>
        <Group><Toggle name="隔离对象"><path d="M1.500 1.500h6v5h-6zM3 15l4-6 4 6z" stroke="#dcdcdc" /><circle cx="12.500" cy="6" r="4" stroke="#dcdcdc" /></Toggle></Group>
        <Group><Toggle name="全屏显示"><path d="M.5 2.500h15v11H.5zM4 11l8-6M8.500 5H12v3M4 8v3h3.500" stroke="#dcdcdc" /></Toggle></Group>
        <Group><Toggle name="自定义"><path d="M0 3h16M0 8h16M0 13h16" stroke="#dcdcdc" strokeWidth="2" /></Toggle></Group>
      </div>
      <div className="pointer-events-none absolute top-0 right-2 font-['Liberation_Sans',sans-serif] text-[26px] leading-6 font-bold text-[#28a010]/90">
        ITMOP.COM
      </div>
    </footer>
  )
}

export default function App() {
  return (
    <div className="flex h-screen flex-col overflow-hidden border border-[#0696d7] bg-[#222831] font-['Noto_Sans','Noto_Sans_CJK_SC',sans-serif] text-xs">
      <TitleBar />
      <RibbonTabs />
      <Ribbon />
      <FileTabs />
      <Canvas />
      <StatusBar />
    </div>
  )
}
